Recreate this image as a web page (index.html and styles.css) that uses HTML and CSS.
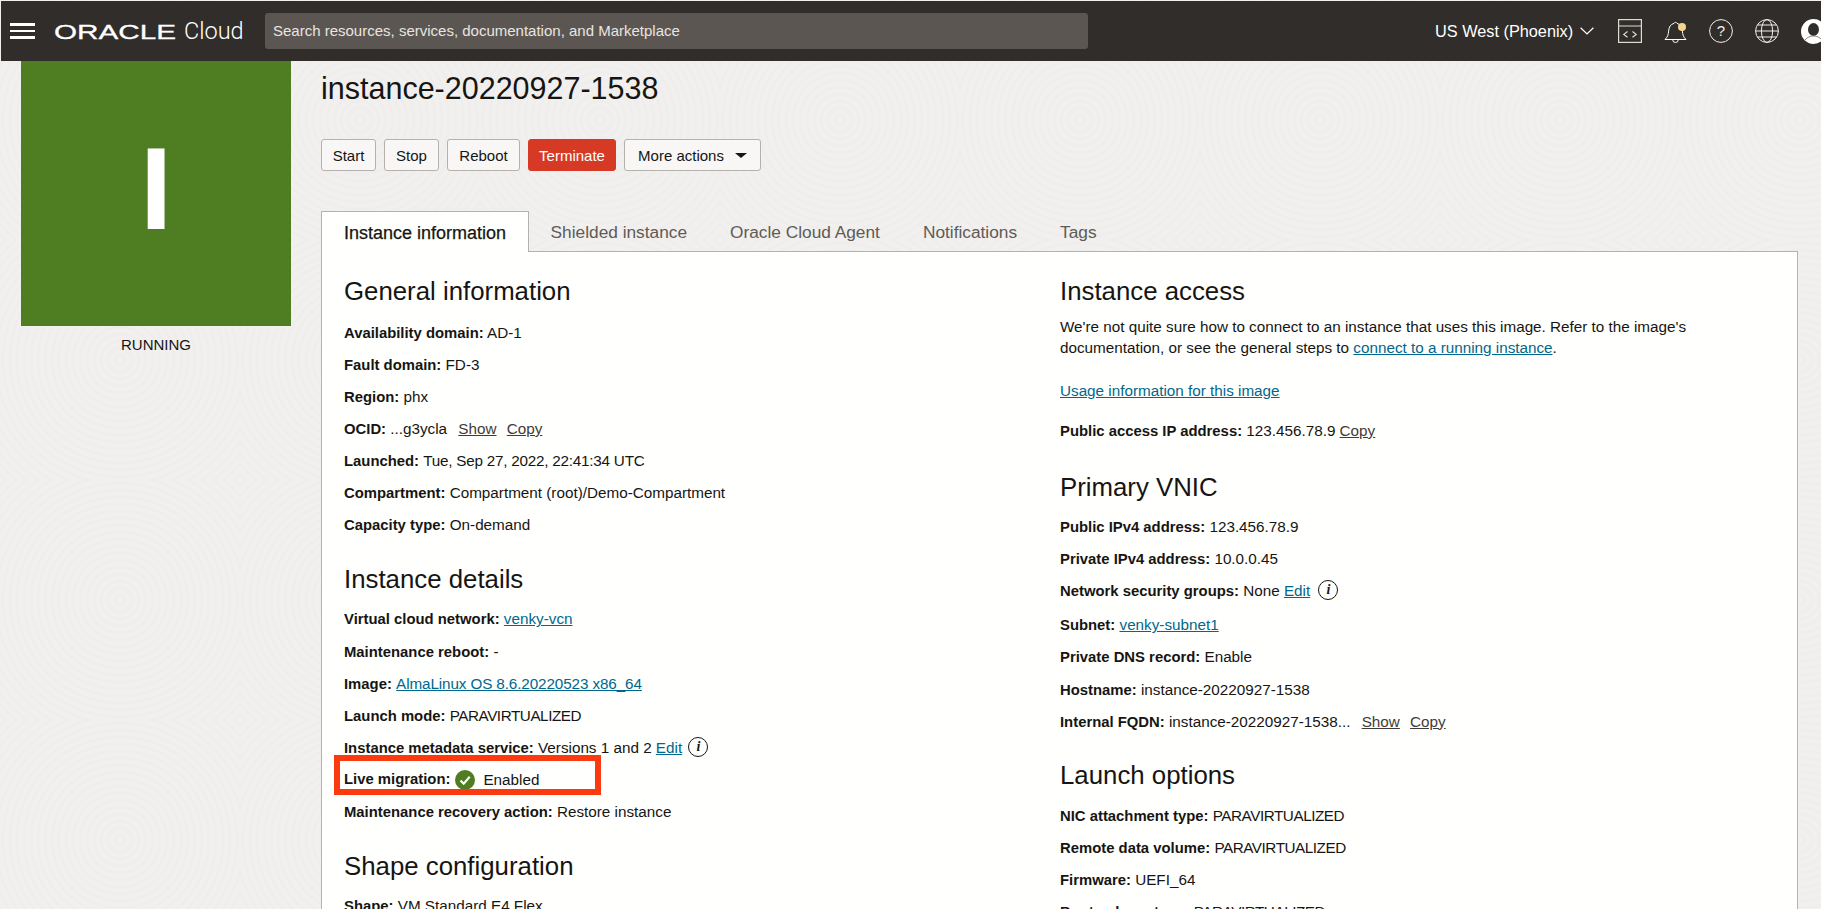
FILE: index.html
```html
<!DOCTYPE html>
<html lang="en">
<head>
  <meta charset="UTF-8">
  <title>instance-20220927-1538</title>
  <link rel="stylesheet" href="styles.css">
</head>
<body>
  <header class="topbar">
    <div class="menu-icon"><span></span><span></span><span></span></div>
    <svg class="wordmark" width="122" height="24" viewBox="0 0 122 24">
      <text x="0" y="19.5" textLength="122" lengthAdjust="spacingAndGlyphs">ORACLE</text>
    </svg>
    <span class="product">Cloud</span>
    <div class="search">Search resources, services, documentation, and Marketplace</div>
    <div class="region">
      US West (Phoenix)
      <svg width="14" height="8" viewBox="0 0 14 8"><path d="M.6.8 7 7 13.4.8" fill="none" stroke="#fff" stroke-width="1.2"/></svg>
    </div>
    <div class="tools">
      <svg width="24" height="24" viewBox="0 0 24 24" fill="none" stroke="#dedbd7" stroke-width="1.2">
        <rect x=".6" y=".6" width="22.8" height="22.8"/>
        <path d="M.6 7h22.8M9.5 12.5 5.8 15.4l3.7 2.9M14.500 12.500l3.700 2.900-3.700 2.900"/>
      </svg>
      <svg class="bell" width="23" height="25" viewBox="0 0 23 25" fill="none" stroke="#fff" stroke-width="1">
        <path d="M1 20.500c2.600-2.400 3.400-5 3.600-8.400.3-4 2-7 5.400-7.700a1.600 1.600 0 0 1 3 0c3.400.7 5.100 3.700 5.400 7.700.2 3.400 1 6 3.600 8.400Z"/>
        <path d="M8.700 20.700a2.800 2.800 0 0 0 5.600 0"/>
        <circle cx="18" cy="8" r="4" fill="#f4d58f" stroke="none"/>
      </svg>
      <svg width="24" height="24" viewBox="0 0 24 24" fill="none" stroke="#f1efed" stroke-width="1">
        <circle cx="12" cy="12" r="11.400"/>
        <text class="help-mark" x="12" y="17.200" text-anchor="middle">?</text>
      </svg>
      <svg width="24" height="24" viewBox="0 0 24 24" fill="none" stroke="#f1efed" stroke-width="1">
        <circle cx="12" cy="12" r="11.400"/>
        <ellipse cx="12" cy="12" rx="5.600" ry="11.400"/>
        <path d="M.6 12h22.800M2.400 6h19.200M2.400 18h19.200"/>
      </svg>
      <svg width="25" height="25" viewBox="0 0 25 25">
        <circle cx="12.500" cy="12.500" r="12.500" fill="#fff"/>
        <ellipse cx="12.500" cy="10.500" rx="5.500" ry="6.500" fill="#312d2a"/>
        <path d="M4 21c2.500-3 5.500-4 8.500-4s6 1 8.500 4" fill="none" stroke="#8f8b86" stroke-width="1"/>
      </svg>
    </div>
  </header>

  <div class="page">
    <aside class="status">
      <div class="status-tile">I</div>
      <div class="status-label">RUNNING</div>
    </aside>

    <main class="content">
      <h1 class="title">instance-20220927-1538</h1>
      <div class="actions">
        <button class="btn btn-small">Start</button>
        <button class="btn btn-small">Stop</button>
        <button class="btn btn-reboot">Reboot</button>
        <button class="btn btn-danger">Terminate</button>
        <button class="btn btn-more">More actions <span class="caret"></span></button>
      </div>

      <nav class="tabs">
        <a class="tab active">Instance information</a>
        <a class="tab">Shielded instance</a>
        <a class="tab">Oracle Cloud Agent</a>
        <a class="tab">Notifications</a>
        <a class="tab">Tags</a>
      </nav>

      <section class="panel">
        <div class="col">
          <h2>General information</h2>
          <div class="row"><b>Availability domain:</b> AD-1</div>
          <div class="row"><b>Fault domain:</b> FD-3</div>
          <div class="row"><b>Region:</b> phx</div>
          <div class="row"><b>OCID:</b> ...g3ycla <a class="act show">Show</a> <a class="act copy">Copy</a></div>
          <div class="row"><b>Launched:</b> <span class="date">Tue, Sep 27, 2022, 22:41:34 UTC</span></div>
          <div class="row"><b>Compartment:</b> Compartment (root)/Demo-Compartment</div>
          <div class="row"><b>Capacity type:</b> On-demand</div>

          <h2>Instance details</h2>
          <div class="row"><b>Virtual cloud network:</b> <a class="link">venky-vcn</a></div>
          <div class="row"><b>Maintenance reboot:</b> -</div>
          <div class="row"><b>Image:</b> <a class="link image-name">AlmaLinux OS 8.6.20220523 x86_64</a></div>
          <div class="row"><b>Launch mode:</b> <span class="caps">PARAVIRTUALIZED</span></div>
          <div class="row"><b>Instance metadata service:</b> Versions 1 and 2 <a class="link">Edit</a> <span class="info">i</span></div>
          <div class="row live">
            <b>Live migration:</b>
            <svg class="check" width="20" height="20" viewBox="0 0 20 20">
              <circle cx="10" cy="10" r="10" fill="#4f7d22"/>
              <path d="M5.500 10.500 8.700 13.700 14.700 6.800" fill="none" stroke="#fff" stroke-width="2.200"/>
            </svg>
            <span>Enabled</span>
            <div class="callout"></div>
          </div>
          <div class="row"><b>Maintenance recovery action:</b> Restore instance</div>

          <h2>Shape configuration</h2>
          <div class="row"><b>Shape:</b> VM.Standard.E4.Flex</div>
        </div>

        <div class="col">
          <h2>Instance access</h2>
          <p class="note">We're not quite sure how to connect to an instance that uses this image. Refer to the image's<br>documentation, or see the general steps to <a class="link">connect to a running instance</a>.</p>
          <div class="usage"><a class="link">Usage information for this image</a></div>
          <div class="row row-last"><b>Public access IP address:</b> 123.456.78.9 <a class="act">Copy</a></div>

          <h2>Primary VNIC</h2>
          <div class="row"><b>Public IPv4 address:</b> 123.456.78.9</div>
          <div class="row"><b>Private IPv4 address:</b> 10.0.0.45</div>
          <div class="row row-tall"><b>Network security groups:</b> None <a class="link">Edit</a> <span class="info spaced">i</span></div>
          <div class="row"><b>Subnet:</b> <a class="link">venky-subnet1</a></div>
          <div class="row"><b>Private DNS record:</b> Enable</div>
          <div class="row"><b>Hostname:</b> instance-20220927-1538</div>
          <div class="row"><b>Internal FQDN:</b> instance-20220927-1538... <a class="act show">Show</a> <a class="act copy">Copy</a></div>

          <h2>Launch options</h2>
          <div class="row"><b>NIC attachment type:</b> <span class="caps">PARAVIRTUALIZED</span></div>
          <div class="row"><b>Remote data volume:</b> <span class="caps">PARAVIRTUALIZED</span></div>
          <div class="row"><b>Firmware:</b> UEFI_64</div>
          <div class="row"><b>Boot volume type:</b> <span class="caps">PARAVIRTUALIZED</span></div>
        </div>
      </section>
    </main>
  </div>
</body>
</html>
```
FILE: styles.css
```css
html, body {
  margin: 0;
  padding: 0;
  height: 909px;
  overflow: hidden;
}
body {
  font-family: "Liberation Sans", Arial, sans-serif;
  font-size: 15.25px;
  color: #161513;
  background-color: #f1f0ee;
  background-image:
    repeating-radial-gradient(circle at 120px 120px, transparent 0, transparent 3px, rgba(0,0,0,0.012) 5px, transparent 7px);
  background-size: 240px 240px;
  padding-top: 1px;
  box-sizing: border-box;
}
b {
  font-size: 14.85px;
}
.topbar {
  display: flex;
  align-items: center;
  height: 60px;
  background: #312d2a;
  color: #fff;
  padding-left: 9px;
  margin-left: 1px;
}
.topbar > * {
  flex: none;
}
.menu-icon {
  width: 25px;
  margin-right: 19px;
}
.menu-icon span {
  display: block;
  height: 2.5px;
  background: #fff;
  margin-bottom: 4px;
}
.menu-icon span:last-child {
  margin-bottom: 0;
}
.wordmark text {
  font-size: 21px;
  fill: #fff;
  stroke: #fff;
  stroke-width: 0.3;
}
.product {
  font-family: Roboto, "Liberation Sans", sans-serif;
  font-weight: 300;
  font-size: 23.5px;
  margin-left: 8px;
  width: 81px;
}
.search {
  width: 823px;
  height: 36px;
  line-height: 36px;
  background: #5b5652;
  border-radius: 3px;
  padding-left: 8px;
  box-sizing: border-box;
  font-size: 15px;
  color: #e8e5e1;
}
.region {
  display: flex;
  align-items: center;
  gap: 7px;
  margin-left: 347px;
  font-size: 16.3px;
  width: 183px;
}
.tools {
  display: flex;
  align-items: center;
  gap: 22px;
}
.help-mark {
  font-size: 15px;
  fill: #f1efed;
  stroke: none;
}
.page {
  display: flex;
  padding-left: 21px;
}
.status {
  width: 270px;
  flex: none;
}
.status-tile {
  height: 265px;
  background: #4f7d22;
  color: #fff;
  font-size: 116px;
  font-weight: bold;
  line-height: 257px;
  text-align: center;
}
.status-label {
  margin-top: 10px;
  text-align: center;
  font-size: 15px;
  line-height: 18px;
}
.content {
  flex: 1;
  margin: 0 23px 0 30px;
  min-width: 0;
}
.title {
  font-size: 30.5px;
  font-weight: normal;
  line-height: 34px;
  margin: 10px 0 0;
}
.actions {
  display: flex;
  gap: 8px;
  margin-top: 34px;
}
.btn {
  height: 32px;
  padding: 0;
  font-family: inherit;
  font-size: 15px;
  color: #161513;
  background: #f8f7f5;
  border: 1px solid #b5b1ac;
  border-radius: 3px;
}
.btn-small {
  width: 55px;
}
.btn-reboot {
  width: 73px;
}
.btn-danger {
  width: 88px;
  background: #d73a24;
  border-color: #d73a24;
  color: #fff;
}
.btn-more {
  display: flex;
  align-items: center;
  justify-content: center;
  gap: 11px;
  width: 137px;
}
.caret {
  width: 0;
  height: 0;
  border-left: 6px solid transparent;
  border-right: 6px solid transparent;
  border-top: 5px solid #161513;
}
.tabs {
  display: flex;
  height: 41px;
  margin-top: 40px;
  box-sizing: border-box;
  border-bottom: 1px solid #b5b1ac;
}
.tab {
  padding: 0 21.5px;
  height: 40px;
  line-height: 42px;
  font-size: 17.3px;
  color: #5f5b57;
  box-sizing: border-box;
}
.tab.active {
  height: 41px;
  padding: 0 22px;
  font-size: 18px;
  color: #161513;
  background: #fffffd;
  border: 1px solid #b5b1ac;
  border-bottom: none;
  line-height: 43px;
  -webkit-text-stroke: 0.25px #161513;
}
.panel {
  display: grid;
  grid-template-columns: 716px 1fr;
  padding: 0 22px;
  height: 700px;
  background: #fffffd;
  border-left: 1px solid #b5b1ac;
  border-right: 1px solid #b5b1ac;
  box-sizing: border-box;
}
h2 {
  font-size: 25.8px;
  font-weight: normal;
  line-height: 32px;
  margin: 27.5px 0 13.5px;
}
.col h2:first-child {
  margin-top: 23px;
  margin-bottom: 14.5px;
}
.row {
  height: 21px;
  line-height: 21px;
  margin-bottom: 11.17px;
  white-space: nowrap;
}
.row-last {
  margin-bottom: 29.5px;
}
.row-tall {
  margin-bottom: 13px;
}
.note {
  line-height: 21px;
  margin: -5.5px 0 22px;
}
.usage {
  line-height: 21px;
  margin-bottom: 19px;
}
.link {
  color: #00688c;
  text-decoration: underline;
}
.date {
  letter-spacing: -0.23px;
}
.image-name {
  letter-spacing: -0.11px;
}
.caps {
  letter-spacing: -0.45px;
}
.act {
  color: #3f3b38;
  text-decoration: underline;
}
.act.show {
  margin-left: 7px;
}
.act.copy {
  margin-left: 6px;
}
.info {
  display: inline-block;
  width: 18px;
  height: 18px;
  line-height: 18px;
  border: 1px solid #161513;
  border-radius: 50%;
  text-align: center;
  font-family: "Liberation Serif", serif;
  font-style: italic;
  font-weight: bold;
  font-size: 14px;
  margin-left: 2px;
  vertical-align: top;
}
.info.spaced {
  margin-left: 4px;
}
.live {
  position: relative;
  display: flex;
  align-items: center;
  gap: 5px;
}
.live span {
  margin-left: 3px;
}
.callout {
  position: absolute;
  left: -10px;
  top: -14.5px;
  width: 267px;
  height: 40px;
  border: 6px solid #fb3a10;
  box-sizing: border-box;
}
```
